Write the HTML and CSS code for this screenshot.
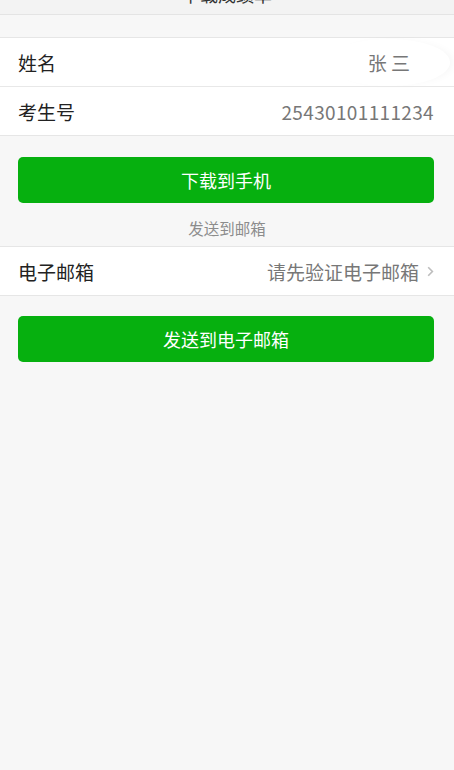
FILE: index.html
```html
<!DOCTYPE html>
<html lang="zh-CN">
<head>
<meta charset="utf-8">
<title>下载成绩单</title>
<link rel="stylesheet" href="styles.css">
</head>
<body>
<header class="topbar"><span class="topbar-title">下载成绩单</span></header>

<section class="group first">
  <div class="row">
    <span class="label">姓名</span>
    <span class="value name">张 三</span>
  </div>
  <div class="row">
    <span class="label">考生号</span>
    <span class="value digits">25430101111234</span>
  </div>
</section>

<div class="btn-wrap"><button class="btn">下载到手机</button></div>

<p class="hint">发送到邮箱</p>

<section class="group">
  <div class="row">
    <span class="label">电子邮箱</span>
    <span class="value link">请先验证电子邮箱
      <svg class="chev" width="7" height="11" viewBox="0 0 7 11"><polyline points="1.2,1.2 5.4,5.5 1.2,9.8" fill="none" stroke="#bdbdbd" stroke-width="1.6"/></svg>
    </span>
  </div>
</section>

<div class="btn-wrap"><button class="btn">发送到电子邮箱</button></div>
</body>
</html>
```
FILE: styles.css
```css
html, body {
  margin: 0;
  padding: 0;
}
body {
  background: #f7f7f7;
  font-family: "Noto Sans CJK SC", "Noto Sans", sans-serif;
  color: #222;
  min-height: 770px;
}
.topbar {
  height: 14px;
  background: #f3f3f3;
  border-bottom: 1px solid #e4e4e4;
  overflow: hidden;
  text-align: center;
}
.topbar-title {
  display: block;
  font-size: 18px;
  line-height: 18px;
  margin-top: -15px;
  color: #333;
}
.group {
  background: #fff;
  border-top: 1px solid #e6e6e6;
  border-bottom: 1px solid #e6e6e6;
}
.group.first {
  margin-top: 22px;
}
.row {
  position: relative;
  height: 48px;
  display: flex;
  align-items: center;
  justify-content: space-between;
  padding: 0 21px 0 18px;
  font-size: 19px;
}
.row + .row {
  border-top: 1px solid #e8e8e8;
}
.label {
  color: #222;
}
.value {
  color: #777;
}
.value.digits {
  letter-spacing: 0.35px;
  margin-right: -1px;
}
.value.name {
  margin-right: 23px;
  position: relative;
}
.value.name::before {
  content: "";
  position: absolute;
  left: -40px;
  right: -40px;
  top: -10px;
  bottom: -10px;
  border-radius: 50%;
  box-shadow: 6px 0 10px -4px rgba(0, 0, 0, 0.05);
}
.value.link {
  display: flex;
  align-items: center;
  gap: 8px;
  margin-right: -1px;
}
.chev {
  display: block;
}
.btn-wrap {
  padding: 21px 20px 0 18px;
}
.btn-wrap:last-child {
  padding-top: 20px;
}
.btn {
  display: block;
  width: 100%;
  height: 46px;
  border: none;
  border-radius: 5px;
  background: #06b00f;
  color: #fff;
  font-family: "Noto Sans CJK SC", "Noto Sans", sans-serif;
  font-size: 18px;
  padding: 0;
}
.hint {
  margin: 0;
  padding: 14px 0 7px;
  line-height: 22px;
  font-size: 15.5px;
  color: #8c8c8c;
  text-align: center;
}
```
